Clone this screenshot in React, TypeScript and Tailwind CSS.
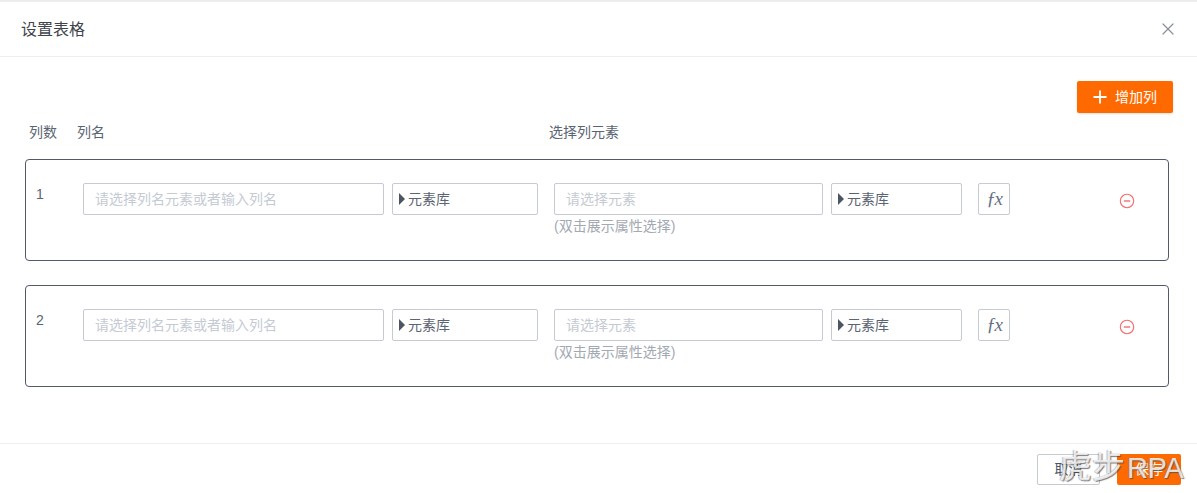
import { Plus, X } from 'lucide-react'

const font = { fontFamily: '"Liberation Sans", "Noto Sans CJK SC", sans-serif' }

function LibrarySelect({ width }: { width: string }) {
  return (
    <div className={`${width} h-8 flex items-center border border-[#c5cad3] rounded-[2px] pl-[6px] text-[14px] text-[#5a6472]`}>
      <span className="w-0 h-0 border-y-[6px] border-y-transparent border-l-[6px] border-l-[#4b5563] mr-[3px] -mt-[1px]" />
      元素库
    </div>
  )
}

function ColumnCard({ index }: { index: number }) {
  return (
    <div className="h-[102px] border border-[#4f5a6b] rounded-[4px] flex pt-[23px] pl-[10px]">
      <div className="w-[47px] text-[14px] leading-[22px] text-[#5a6472]">{index}</div>
      <div className="w-[301px] h-8 border border-[#c5cad3] rounded-[2px] px-[11px] flex items-center text-[14px] text-[#c5cad3]">
        请选择列名元素或者输入列名
      </div>
      <div className="ml-2">
        <LibrarySelect width="w-[146px]" />
      </div>
      <div className="ml-4 w-[269px]">
        <div className="h-8 border border-[#c5cad3] rounded-[2px] px-[11px] flex items-center text-[14px] text-[#c5cad3]">
          请选择元素
        </div>
        <div className="text-[14px] leading-[22px] text-[#a3a9b3]">(双击展示属性选择)</div>
      </div>
      <div className="ml-2">
        <LibrarySelect width="w-[131px]" />
      </div>
      <div className="ml-4 w-8 h-8 border border-[#c5cad3] rounded-[2px] flex items-center justify-center">
        <span className="text-[19px] italic tracking-[-1.5px] text-[#667085]" style={{ fontFamily: '"Liberation Serif", serif' }}>ƒx</span>
      </div>
      <div className="ml-[109px] h-8 flex items-center">
        <svg width="16" height="16" viewBox="0 0 16 16" fill="none" className="mt-[3px]">
          <circle cx="8" cy="8" r="6.7" stroke="#f56c6c" strokeWidth="1.1" />
          <path d="M4.8 8h6.4" stroke="#f56c6c" strokeWidth="1.4" />
        </svg>
      </div>
    </div>
  )
}

export default function App() {
  return (
    <div className="relative w-[1197px] h-[493px] bg-white overflow-hidden" style={font}>
      <div className="h-[2px] bg-[#ececec]" />
      <div className="h-[55px] border-b border-[#eeeeee] flex items-center justify-between pl-[21px] pr-[19px]">
        <span className="text-[16px] text-[#3f444c] mt-[1px]">设置表格</span>
        <X size={20} strokeWidth={1.5} className="text-[#8a929e]" />
      </div>

      <div className="h-[386px] px-[25px] pr-[28px]">
        <div className="flex justify-end pt-6">
          <button className="w-[96px] h-8 -mr-1 bg-[#ff6a00] rounded-[2px] text-white text-[14px] flex items-center justify-center pr-[3px] shadow-sm">
            <Plus size={20} strokeWidth={2.2} className="mr-[5px]" />
            <span>增加列</span>
          </button>
        </div>
        <div className="flex text-[14px] leading-[20px] text-[#5a6472] mt-[9px] pl-1">
          <span className="w-12">列数</span>
          <span className="w-[472px]">列名</span>
          <span>选择列元素</span>
        </div>
        <div className="mt-[17px] flex flex-col gap-6">
          <ColumnCard index={1} />
          <ColumnCard index={2} />
        </div>
      </div>

      <div className="h-[50px] border-t border-[#eeeeee] flex justify-end gap-[17px] pt-[10px] pr-4">
        <button className="w-[63px] h-[31px] border border-[#c5cad3] rounded-[2px] text-[14px] text-[#4b5563]">取消</button>
        <button className="w-[64px] h-[31px] bg-[#ff6a00] rounded-[2px] text-[14px] text-white">保存</button>
      </div>

      <div
        className="absolute left-[1059px] top-[446px] text-[33px] leading-[42px] whitespace-nowrap text-white/80"
        style={{ textShadow: '1px 1px 1px rgba(70,70,70,0.7), -1px 0 1px rgba(110,110,110,0.45)' }}
      >
        虎步<span className="text-[29px] tracking-[-0.5px] ml-[2px]">RPA</span>
      </div>
    </div>
  )
}
